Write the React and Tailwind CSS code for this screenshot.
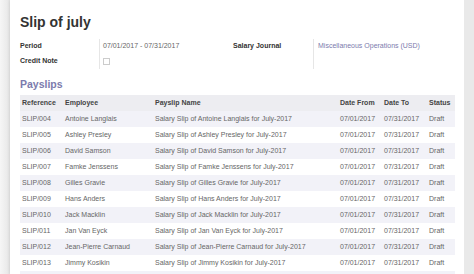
import React from "react";

const rows = [
  ["SLIP/004", "Antoine Langlais"],
  ["SLIP/005", "Ashley Presley"],
  ["SLIP/006", "David Samson"],
  ["SLIP/007", "Famke Jenssens"],
  ["SLIP/008", "Gilles Gravie"],
  ["SLIP/009", "Hans Anders"],
  ["SLIP/010", "Jack Macklin"],
  ["SLIP/011", "Jan Van Eyck"],
  ["SLIP/012", "Jean-Pierre Carnaud"],
  ["SLIP/013", "Jimmy Kosikin"],
];

export default function App() {
  return (
    <div
      className="flex h-[274px] w-[474px] overflow-hidden bg-[#ececec]"
      style={{ fontFamily: '"Liberation Sans", Arial, sans-serif' }}
    >
      <div className="w-[10px] shrink-0 bg-gradient-to-r from-[#f6f6f6] to-[#e6e6e6]" />
      <div className="w-[454px] shrink-0 bg-white pl-[10px] pr-[9px] pt-[12px] shadow-[0_0_3px_rgba(0,0,0,0.15)]">
        <h1 className="text-[14px] font-bold leading-[20px] text-[#333]">Slip of july</h1>
        <div className="mt-[7px] flex text-[7px]">
          <div className="flex w-[213px]">
            <div className="flex w-[79px] flex-col font-bold text-[#333]">
              <div className="flex h-[15px] items-center">Period</div>
              <div className="flex h-[15px] items-center">Credit Note</div>
            </div>
            <div className="flex flex-col border-l border-[#e6e6e6] pl-[3px] text-[#666]">
              <div className="flex h-[15px] items-center">07/01/2017 - 07/31/2017</div>
              <div className="flex h-[15px] items-center">
                <div className="h-[7px] w-[7px] border border-[#ccc] bg-white" />
              </div>
            </div>
          </div>
          <div className="flex">
            <div className="flex w-[80px] flex-col font-bold text-[#333]">
              <div className="flex h-[15px] items-center">Salary Journal</div>
            </div>
            <div className="flex flex-col border-l border-[#e6e6e6] pl-[4px] text-[#7c7bad]">
              <div className="flex h-[15px] items-center">Miscellaneous Operations (USD)</div>
              <div className="h-[15px]" />
            </div>
          </div>
        </div>
        <h2 className="mt-[8px] text-[10.5px] font-bold leading-[14px] text-[#7c7bad]">Payslips</h2>
        <table className="mt-[4px] w-[435px] table-fixed border-collapse text-[7px] text-[#666]">
          <colgroup>
            <col className="w-[45px]" />
            <col className="w-[90px]" />
            <col className="w-[185px]" />
            <col className="w-[44px]" />
            <col className="w-[45px]" />
            <col className="w-[26px]" />
          </colgroup>
          <thead>
            <tr className="h-[16px] bg-[#ededf1] text-left font-bold text-[#444]">
              <th className="pl-[2px]">Reference</th>
              <th>Employee</th>
              <th>Payslip Name</th>
              <th>Date From</th>
              <th>Date To</th>
              <th>Status</th>
            </tr>
          </thead>
          <tbody>
            {rows.map(([ref, name], i) => (
              <tr key={ref} className={i % 2 === 0 ? "h-[16px] bg-[#f2f2f8]" : "h-[16px] bg-white"}>
                <td className="pl-[2px]">{ref}</td>
                <td>{name}</td>
                <td>Salary Slip of {name} for July-2017</td>
                <td>07/01/2017</td>
                <td>07/31/2017</td>
                <td>Draft</td>
              </tr>
            ))}
            <tr className="h-[16px] bg-[#f2f2f8]">
              <td colSpan={6} />
            </tr>
          </tbody>
        </table>
      </div>
      <div className="flex-1 bg-[#e9e9e9]" />
    </div>
  );
}
